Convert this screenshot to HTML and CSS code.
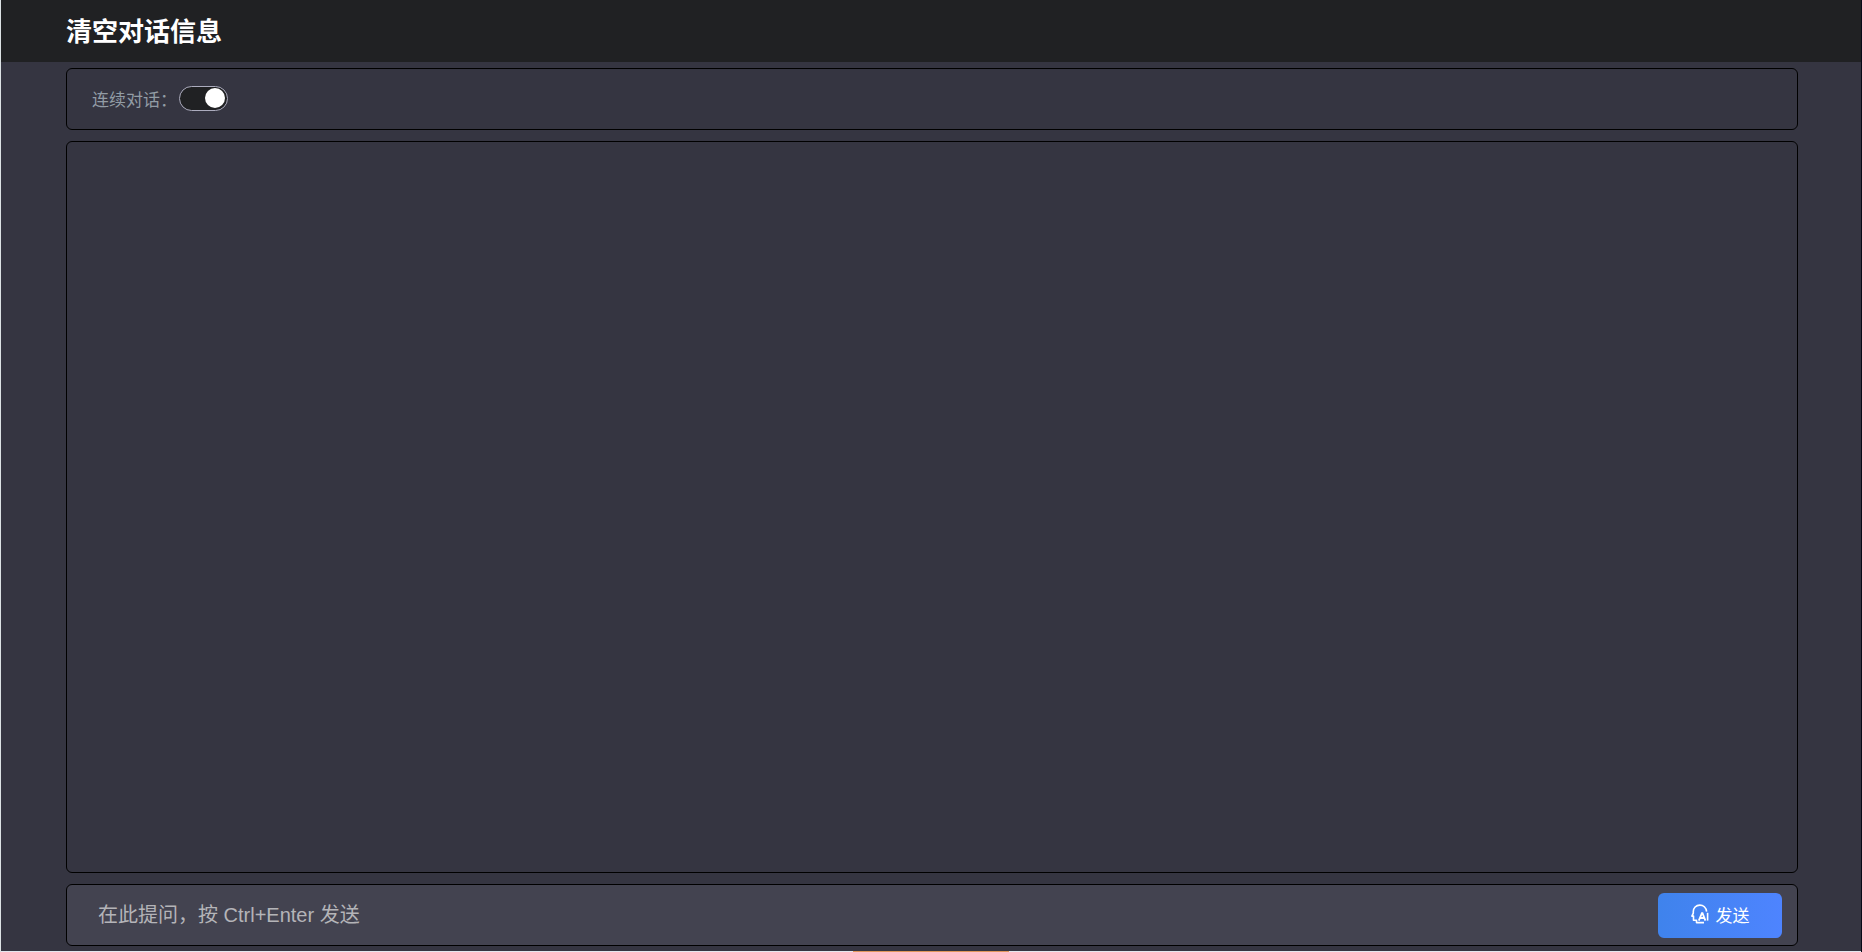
FILE: index.html
```html
<!DOCTYPE html>
<html lang="zh-CN">
<head>
    <meta charset="UTF-8">
    <meta name="viewport" content="width=device-width, initial-scale=1.0">
    <title>清空对话信息</title>
    <link rel="stylesheet" href="styles.css">
</head>
<body>
    <header class="header">
        <h1><button type="button" class="clear" id="clear">清空对话信息</button></h1>
    </header>
    <main class="main">
        <div class="panel options">
            <label for="keep">连续对话：</label>
            <input type="checkbox" id="keep" class="switch" checked>
        </div>
        <div class="panel chat" id="chat"></div>
        <form class="panel ask" id="ask">
            <input type="text" id="question" class="question" placeholder="在此提问，按 Ctrl+Enter 发送" aria-label="提问" autocomplete="off">
            <button type="submit" class="send">
                <svg class="icon" viewBox="0 0 18 20" fill="none" stroke="currentColor" aria-hidden="true">
                    <path d="M15.6 7.6C15.2 3.7 12.3 1.1 8.8 1.1 5 1.1 2.3 4 2.3 7.6V9.2L.9 12.1H2.5V16.2H5.5V18.6H13" stroke-width="1.6" stroke-linejoin="round"/>
                    <path d="M7.8 16.6 10.9 9.2H11.5L14.4 16.6M9.2 14H13.2" stroke-width="1.8"/>
                    <path d="M16.6 8.8V16.6" stroke-width="1.6"/>
                </svg>
                <span>发送</span>
            </button>
        </form>
    </main>
    <div class="bottom-edge"></div>
    <script>
        const chat = document.getElementById("chat");
        const question = document.getElementById("question");
        document.getElementById("clear").onclick = () => {
            chat.textContent = "";
        };
        document.getElementById("ask").onsubmit = (e) => {
            e.preventDefault();
            if (!question.value.trim()) return;
            const p = document.createElement("p");
            p.textContent = question.value;
            chat.appendChild(p);
            question.value = "";
        };
    </script>
</body>
</html>
```
FILE: styles.css
```css
* {
    box-sizing: border-box;
}
body {
    display: flex;
    flex-direction: column;
    height: 100vh;
    margin: 0;
    border-left: 1px solid #dce2e4;
    border-right: 1px solid #080a18;
    background-color: #353541;
    color: #fff;
    font-family: "Liberation Sans", "Noto Sans CJK SC", sans-serif;
}
button,
input {
    font-family: inherit;
}
.header {
    display: flex;
    align-items: center;
    height: 62px;
    padding: 2px 65px 0;
    background-color: #202123;
}
h1 {
    margin: 0;
    font-size: 26px;
}
.clear {
    display: block;
    padding: 0;
    border: none;
    background: none;
    color: #fff;
    font-size: 26px;
    font-weight: bold;
    line-height: 36px;
    cursor: pointer;
}
.main {
    flex: 1;
    display: flex;
    flex-direction: column;
    gap: 11px;
    min-height: 0;
    padding: 6px 63px 5px 65px;
}
.panel {
    border: 1px solid #000;
    border-radius: 6px;
}
.options {
    display: flex;
    align-items: center;
    gap: 2px;
    height: 62px;
    padding: 0 25px 2px;
    color: #929ca5;
    font-size: 17px;
}
.switch {
    appearance: none;
    display: flex;
    align-items: center;
    width: 49px;
    height: 25px;
    margin: 0;
    padding: 0 2px;
    border: 1px solid #acacbe;
    border-radius: 13px;
    background-color: #202123;
    cursor: pointer;
}
.switch::before {
    content: "";
    width: 20px;
    height: 20px;
    border-radius: 50%;
    background-color: #fff;
}
.switch:checked {
    justify-content: flex-end;
}
.chat {
    flex: 1;
    overflow-y: auto;
    padding: 0 25px;
}
.ask {
    display: flex;
    align-items: center;
    height: 62px;
    padding: 0 15px 0 31px;
    background-color: #434350;
}
.question {
    flex: 1;
    height: 45px;
    padding: 0;
    border: none;
    outline: none;
    background: none;
    color: #fff;
    font-size: 20px;
}
.question::placeholder {
    color: #b4b4b8;
}
.send {
    display: flex;
    justify-content: center;
    align-items: center;
    gap: 7px;
    width: 124px;
    height: 45px;
    padding: 0 0 2px;
    border: none;
    border-radius: 6px;
    background: linear-gradient(90deg, #3f83ec, #4e84ff);
    color: #fff;
    font-size: 17px;
    cursor: pointer;
}
.icon {
    width: 18px;
    height: 20px;
}
.bottom-edge {
    height: 1px;
    background: linear-gradient(#e0965c, #e0965c) 50% 0 / 156px 1px no-repeat #e4e6ee;
}
```
